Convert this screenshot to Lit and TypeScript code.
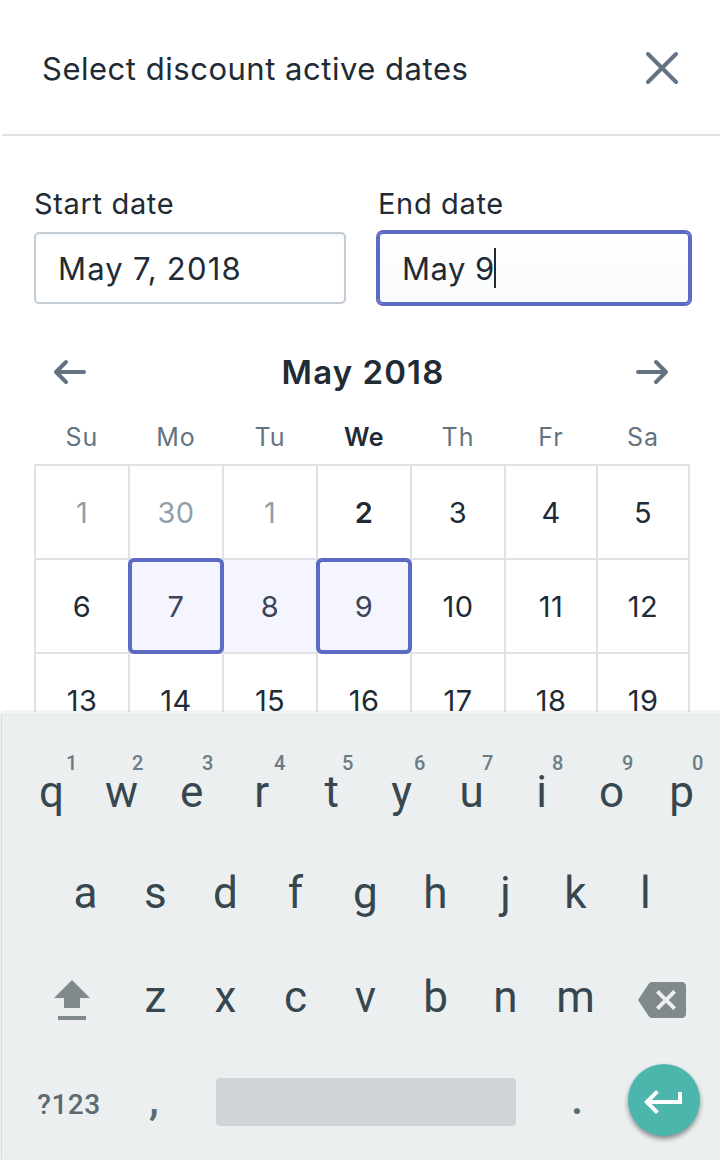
import { LitElement, html, css, svg, nothing } from "lit";
import { customElement } from "lit/decorators.js";
import { classMap } from "lit/directives/class-map.js";

interface Day {
  label: string;
  muted?: boolean;
  today?: boolean;
  inRange?: boolean;
  endpoint?: boolean;
}

const WEEKDAYS = ["Su", "Mo", "Tu", "We", "Th", "Fr", "Sa"];

const WEEKS: Day[][] = [
  [
    { label: "1", muted: true },
    { label: "30", muted: true },
    { label: "1", muted: true },
    { label: "2", today: true },
    { label: "3" },
    { label: "4" },
    { label: "5" },
  ],
  [
    { label: "6" },
    { label: "7", endpoint: true },
    { label: "8", inRange: true },
    { label: "9", endpoint: true },
    { label: "10" },
    { label: "11" },
    { label: "12" },
  ],
  ["13", "14", "15", "16", "17", "18", "19"].map((label) => ({ label })),
];

// Letter, number hint, and the hint's distance from the centre of the key.
const TOP_KEYS: [string, string, number][] = [
  ["q", "1", 20],
  ["w", "2", 16],
  ["e", "3", 16],
  ["r", "4", 18],
  ["t", "5", 16],
  ["y", "6", 18],
  ["u", "7", 16],
  ["i", "8", 16],
  ["o", "9", 16],
  ["p", "0", 16],
];

@customElement("date-field")
class DateField extends LitElement {
  static properties = {
    label: {},
    value: {},
    active: { type: Boolean, reflect: true },
  };
  declare label: string;
  declare value: string;
  declare active: boolean;

  static styles = css`
    :host {
      display: block;
      color: #212b35;
    }
    .label {
      font-size: 29px;
      line-height: 36px;
      letter-spacing: 0.66px;
    }
    .box {
      box-sizing: border-box;
      display: flex;
      align-items: center;
      height: 72px;
      margin-top: 10px;
      padding: 1px 0 0 22px;
      border: 2px solid #c4cdd5;
      border-radius: 5px;
      font-size: 31px;
      line-height: 40px;
      letter-spacing: 1.2px;
      word-spacing: -1px;
      white-space: pre;
      box-shadow: inset 0 2px 2px rgba(99, 115, 129, 0.08);
    }
    :host([active]) .box {
      border-color: #5c6ac4;
      box-shadow: 0 0 0 2px #5c6ac4;
      background: linear-gradient(#ffffff, #f9fafa);
      letter-spacing: 0.5px;
      word-spacing: 0;
    }
    .caret {
      width: 2px;
      height: 40px;
      background: #212b35;
      margin: -1px 0 0 -1px;
    }
  `;

  render() {
    return html`
      <div class="label">${this.label}</div>
      <div class="box">
        <span>${this.value}</span>${this.active
          ? html`<span class="caret"></span>`
          : nothing}
      </div>
    `;
  }
}

@customElement("month-calendar")
class MonthCalendar extends LitElement {
  static styles = css`
    :host {
      display: block;
      color: #212b35;
    }
    .nav {
      display: flex;
      align-items: center;
      justify-content: space-between;
      height: 44px;
      padding: 0 20px 0 18px;
    }
    .nav svg {
      width: 36px;
      height: 28px;
    }
    .month {
      padding-left: 4px;
      font-size: 33px;
      font-weight: 600;
      letter-spacing: 1.1px;
    }
    .weekdays,
    .week {
      display: grid;
      grid-template-columns: repeat(5, 94px) 92px 92px;
    }
    .weekdays {
      height: 54px;
      margin-top: 16px;
      padding-left: 1px;
      line-height: 54px;
      text-align: center;
      font-size: 25px;
      letter-spacing: 1px;
      color: #637381;
    }
    .weekdays .today {
      color: #212b35;
      font-weight: 600;
      letter-spacing: 0.5px;
    }
    .grid {
      width: 654px;
      border-right: 2px solid #dfe3e8;
    }
    .day {
      position: relative;
      box-sizing: border-box;
      height: 94px;
      padding-top: 1px;
      border-left: 2px solid #dfe3e8;
      border-top: 2px solid #dfe3e8;
      line-height: 92px;
      text-align: center;
      font-size: 29px;
      letter-spacing: 0.4px;
    }
    .muted {
      color: #919eab;
    }
    .day.today {
      font-weight: 600;
    }
    .in-range,
    .endpoint {
      background: #f4f5fe;
      background-clip: padding-box;
      color: #3b4458;
    }
    .endpoint::after {
      content: "";
      position: absolute;
      z-index: 1;
      top: -2px;
      left: -2px;
      border: 4px solid #5c6ac4;
      border-radius: 6px;
      box-sizing: border-box;
      width: 96px;
      height: 96px;
    }
  `;

  private arrow(d: string) {
    return html`<svg viewBox="0 0 36 28" fill="none" stroke="#637381" stroke-width="4" stroke-linecap="round" stroke-linejoin="round">
      ${svg`<path d=${d} />`}
    </svg>`;
  }

  render() {
    return html`
      <div class="nav">
        ${this.arrow("M32 14H4M14 4L4 14L14 24")}
        <span class="month">May 2018</span>
        ${this.arrow("M4 14H32M22 4L32 14L22 24")}
      </div>
      <div class="weekdays">
        ${WEEKDAYS.map(
          (d) => html`<span class=${classMap({ today: d === "We" })}>${d}</span>`
        )}
      </div>
      <div class="grid">
        ${WEEKS.map(
          (week) => html`<div class="week">
            ${week.map(
              (d) => html`<div
                class=${classMap({
                  day: true,
                  muted: !!d.muted,
                  today: !!d.today,
                  "in-range": !!d.inRange,
                  endpoint: !!d.endpoint,
                })}
              >${d.label}</div>`
            )}
          </div>`
        )}
      </div>
    `;
  }
}

@customElement("touch-keyboard")
class TouchKeyboard extends LitElement {
  static styles = css`
    :host {
      display: block;
      box-sizing: border-box;
      padding-top: 26px;
      border-top: 1px solid #f6f8f8;
      background: #ebeff0;
      box-shadow: 0 1px 3px rgba(0, 0, 0, 0.36);
      font-family: Roboto, sans-serif;
      color: #37474f;
    }
    .row {
      display: grid;
      grid-auto-flow: column;
      grid-auto-columns: 70px;
      align-items: center;
      justify-items: center;
      font-size: 44px;
      line-height: 52px;
    }
    .first {
      box-sizing: border-box;
      height: 104px;
      padding: 2px 0 0 14.6px;
    }
    .second {
      height: 100px;
      padding-left: 48.4px;
    }
    .third {
      height: 108px;
      padding-left: 35px;
      grid-template-columns: 83.5px repeat(7, 70px) 102.5px;
    }
    .bottom {
      height: 102px;
      padding-left: 32px;
      grid-template-columns: 69px 100px 326px 96px 78px;
      color: #5c6b72;
    }
    .key {
      position: relative;
      width: 70px;
      text-align: center;
    }
    .hint {
      position: absolute;
      top: -15px;
      width: 20px;
      margin-left: -10px;
      font-size: 20px;
      line-height: 24px;
      font-weight: 500;
      color: #6c7c84;
    }
    .shift {
      width: 36px;
      height: 40px;
      margin: 6px 13.5px 0 0;
    }
    .backspace {
      width: 48px;
      height: 48px;
      margin: 6px 0 0 0.5px;
    }
    .symbols {
      padding: 5px 0 0 1px;
      font-size: 28px;
      font-weight: 500;
      letter-spacing: 0.5px;
    }
    .comma {
      font-weight: 500;
      padding: 0 0 6px 2px;
    }
    .period {
      font-weight: 500;
      padding-bottom: 6px;
    }
    .space {
      width: 300px;
      height: 48px;
      border-radius: 4px;
      background: #cfd4d7;
    }
    .enter {
      display: flex;
      align-items: center;
      justify-content: center;
      width: 72px;
      height: 72px;
      margin-bottom: 4px;
      border-radius: 50%;
      background: #4db6ac;
      box-shadow: 0 3px 5px rgba(0, 0, 0, 0.42);
    }
    .enter svg {
      width: 48px;
      height: 48px;
      margin-top: 4px;
    }
  `;

  private key(k: string) {
    return html`<span class="key">${k}</span>`;
  }

  render() {
    return html`
      <div class="row first">
        ${TOP_KEYS.map(
          ([k, n, dx]) => html`<span class="key"
            >${k}<span class="hint" style="left:${35 + dx}px">${n}</span></span
          >`
        )}
      </div>
      <div class="row second">${[..."asdfghjkl"].map((k) => this.key(k))}</div>
      <div class="row third">
        <svg class="shift" viewBox="0 0 36 40" fill="#808a8d">
          <path d="M18 0L36 18H26V28H10V18H0ZM4 36H32V40H4Z" />
        </svg>
        ${[..."zxcvbnm"].map((k) => this.key(k))}
        <svg class="backspace" viewBox="0 0 24 24" fill="#808a8d">
          <path
            d="M22 3H7c-.69 0-1.23.35-1.59.88L0 12l5.41 8.11c.36.53.9.89 1.59.89h15c1.1 0 2-.9 2-2V5c0-1.1-.9-2-2-2zm-3 12.59L17.59 17 14 13.41 10.41 17 9 15.59 12.59 12 9 8.41 10.41 7 14 10.59 17.59 7 19 8.41 15.41 12 19 15.59z"
          />
        </svg>
      </div>
      <div class="row bottom">
        <span class="symbols">?123</span>
        <span class="comma">,</span>
        <span class="space"></span>
        <span class="period">.</span>
        <span class="enter">
          <svg viewBox="0 0 24 24" fill="#fff">
            <path d="M19 7v4H5.83l3.58-3.59L8 6l-6 6 6 6 1.41-1.41L5.83 13H21V7z" />
          </svg>
        </span>
      </div>
    `;
  }
}

@customElement("app-root")
class AppRoot extends LitElement {
  static styles = css`
    :host {
      display: block;
      box-sizing: border-box;
      width: 720px;
      height: 1160px;
      overflow: hidden;
      background: #fff;
      color: #212b35;
      font-family: Inter, "Liberation Sans", sans-serif;
    }
    .header {
      box-sizing: border-box;
      display: flex;
      align-items: center;
      justify-content: space-between;
      height: 136px;
      margin-left: 2px;
      padding: 3px 40px 0 40px;
      border-bottom: 2px solid #dfe3e8;
    }
    .title {
      font-size: 31px;
      letter-spacing: 0.52px;
    }
    .close {
      width: 36px;
      height: 36px;
      margin-bottom: 1px;
    }
    .content {
      box-sizing: border-box;
      height: 576px;
      overflow: hidden;
      padding: 50px 30px 0 34px;
    }
    .fields {
      display: grid;
      grid-template-columns: 312px 312px;
      column-gap: 32px;
    }
    .calendar {
      margin-top: 46px;
    }
    touch-keyboard {
      position: relative;
      height: 448px;
      margin-left: 2px;
    }
  `;

  render() {
    return html`
      <div class="header">
        <span class="title">Select discount active dates</span>
        <svg class="close" viewBox="0 0 36 36" fill="none" stroke="#637381" stroke-width="4" stroke-linecap="round">
          <path d="M4 4L32 32M32 4L4 32" />
        </svg>
      </div>
      <div class="content">
        <div class="fields">
          <date-field label="Start date" value="May 7, 2018"></date-field>
          <date-field label="End date" value="May 9" active></date-field>
        </div>
        <month-calendar class="calendar"></month-calendar>
      </div>
      <touch-keyboard></touch-keyboard>
    `;
  }
}
